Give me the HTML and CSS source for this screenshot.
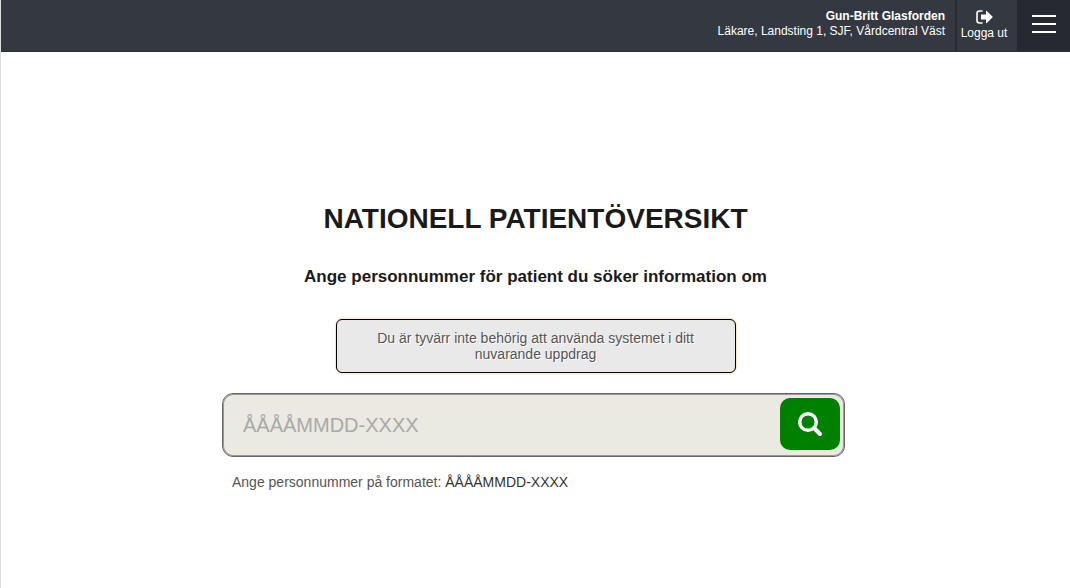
FILE: index.html
```html
<!DOCTYPE html>
<html lang="sv">
<head>
	<meta charset="UTF-8">
	<title>Nationell patientöversikt</title>
	<link rel="stylesheet" href="styles.css">
</head>
<body>

	<header class="topbar">
		<div class="user">
			<strong>Gun-Britt Glasforden</strong>
			<span>Läkare, Landsting 1, SJF, Vårdcentral Väst</span>
		</div>
		<a class="logout" href="#">
			<svg width="17" height="14" viewBox="0 0 17 14" aria-hidden="true">
				<path d="M6 1H3.5Q1 1 1 3.5V10.5Q1 13 3.5 13H6" fill="none" stroke="#fff" stroke-width="1.6" stroke-linecap="round"/>
				<path d="M5 4.5H10V1.2Q10 0.4 10.8 1L16.4 6.4Q17 7 16.4 7.6L10.8 13Q10 13.6 10 12.8V9.5H5Z" fill="#fff"/>
			</svg>
			<span>Logga ut</span>
		</a>
		<button class="menu" type="button" aria-label="Meny">
			<span></span>
			<span></span>
			<span></span>
		</button>
	</header>

	<main class="content">
		<h1>NATIONELL PATIENTÖVERSIKT</h1>
		<h2>Ange personnummer för patient du söker information om</h2>
		<p class="alert">Du är tyvärr inte behörig att använda systemet i ditt nuvarande uppdrag</p>
		<form class="search">
			<div class="search-box">
				<input type="text" id="pnr" placeholder="ÅÅÅÅMMDD-XXXX">
				<button type="button" aria-label="Sök">
					<svg width="26" height="26" viewBox="0 0 26 26" aria-hidden="true">
						<circle cx="11" cy="11" r="8.300" fill="none" stroke="#fff" stroke-width="3.500"/>
						<path d="M17 17L23 23" stroke="#fff" stroke-width="4" stroke-linecap="round"/>
					</svg>
				</button>
			</div>
			<label for="pnr">Ange personnummer på formatet: <span>ÅÅÅÅMMDD-XXXX</span></label>
		</form>
	</main>

</body>
</html>
```
FILE: styles.css
```css
*{margin: 0;padding: 0;box-sizing: border-box;}
body{
	min-height: 100vh;
	border-left: 1px solid #ddd;
	background: #fff;
	font-family: "Liberation Sans", Arial, sans-serif;
	color: #1a1a1a;
}

/* top bar */
.topbar{
	display: flex;
	justify-content: flex-end;
	height: 52px;
	background: #343840;
	border-bottom: 1px solid #2e3138;
	color: #fff;
	font-size: 12px;
	line-height: 15px;
}
.user{
	display: flex;
	flex-direction: column;
	padding: 9px 10px 0 0;
	text-align: right;
}
.logout{
	display: flex;
	flex-direction: column;
	align-items: center;
	width: 62px;
	padding: 10px 6px 0 0;
	border-left: 2px solid #2a2c33;
	color: #fff;
	text-decoration: none;
}
.logout span{
	margin-top: 2px;
}
.menu{
	display: flex;
	flex-direction: column;
	align-items: center;
	gap: 6px;
	width: 53px;
	padding-top: 15px;
	border: 0;
	background: #272932;
	cursor: pointer;
}
.menu span{
	width: 24px;
	height: 2px;
	background: #fff;
}

/* search page */
.content{
	max-width: 627px;
	margin: 0 auto;
	padding-top: 151px;
	text-align: center;
}
h1{
	font-size: 28px;
	line-height: 32px;
}
h2{
	margin-top: 32px;
	font-size: 17px;
	line-height: 20px;
}
.alert{
	max-width: 400px;
	margin: 32px auto 0;
	padding: 10px 30px;
	border: 1px solid #000;
	border-radius: 6px;
	background: #e9e9e9;
	box-shadow: 0 0 2px #f0a040;
	color: #555;
	font-size: 14px;
	line-height: 16px;
	text-shadow: 1px 1px 0 #fff;
}
.search{
	margin-top: 20px;
	text-align: left;
}
.search-box{
	display: flex;
	align-items: flex-start;
	max-width: 623px;
	height: 64px;
	padding: 4px 4px 0 20px;
	border: 1px solid #666;
	border-radius: 11px;
	background: #eaeae2;
	box-shadow: inset 0 0 0 1px #999;
}
.search-box input{
	flex: 1;
	min-width: 0;
	height: 54px;
	border: 0;
	outline: 0;
	background: none;
	font-family: inherit;
	font-size: 20px;
	color: #333;
}
.search-box input::placeholder{
	color: #a9a9a9;
}
.search-box button{
	display: flex;
	align-items: center;
	justify-content: center;
	width: 60px;
	height: 52px;
	border: 0;
	border-radius: 10px;
	background: #008000;
	cursor: pointer;
}
.search label{
	display: block;
	padding: 17px 10px;
	color: #555;
	font-size: 14px;
	line-height: 16px;
}
.search label span{
	color: #333;
}
```
